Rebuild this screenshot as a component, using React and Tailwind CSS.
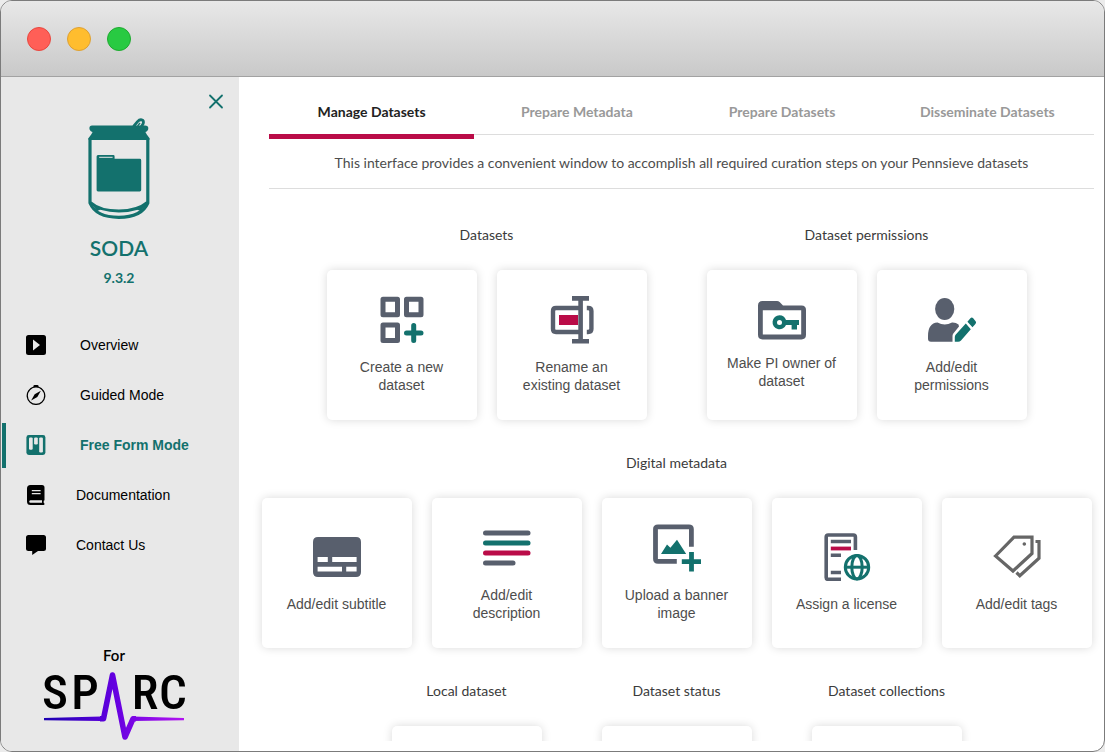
import React from "react";
import { BsCompass } from "react-icons/bs";

const GRAY = "#585f6d";
const TEAL = "#13716d";
const RED = "#ba0c48";

function Can() {
  return (
    <svg width="62" height="102" viewBox="0 0 62 102" fill="none" stroke={TEAL} aria-hidden="true">
      <path d="M45.5 8.5 L49.5 3.6 Q52 0.9 54.6 2.2 Q56.2 3.4 54.8 6.4 L53 9" strokeWidth="2.8" />
      <path d="M49.6 8 L52 5" strokeWidth="1.4" />
      <path d="M4 7.4 H57 Q60.3 7.4 60.3 10.2 Q60.3 13 57.4 14 L58.8 16.6 L61.4 20 V22 H0.6 V20 L3.2 16.6 L4.6 14 Q1.4 13 1.4 10.2 Q1.4 7.4 4 7.4 Z" fill={TEAL} stroke="none" />
      <path d="M2 20 V85 Q8 99.3 30.8 99.3 Q53.6 99.3 59.8 85 V20" strokeWidth="3.2" />
      <path d="M2.5 84.5 Q12 93 30.8 93 Q49.6 93 59.4 84.5" strokeWidth="3" />
      <path d="M3 85 L9 93 L14 91 Z M59 85 L52.6 93 L47.6 91 Z" fill={TEAL} stroke="none" />
      <path d="M8.6 38.6 Q8.6 37 10 37 H25.3 Q26.6 37 26.6 38.4 V40.8 H51.8 Q53.2 40.8 53.2 42.2 V72 Q53.2 73.4 51.8 73.4 H10 Q8.6 73.4 8.6 72 Z" fill={TEAL} stroke="none" />
      <path d="M11.2 39.4 H24.6" stroke="#bcd0cf" strokeWidth="1.4" />
    </svg>
  );
}

function SparcLogo() {
  return (
    <svg width="142" height="70" viewBox="0 0 142 70" className="overflow-visible" role="img" aria-label="SPARC">
      <defs>
        <linearGradient id="pulse" x1="0" y1="0" x2="142" y2="0" gradientUnits="userSpaceOnUse">
          <stop offset="0" stopColor="#1a00b0" />
          <stop offset="0.5" stopColor="#6400e0" />
          <stop offset="1" stopColor="#b414f0" />
        </linearGradient>
      </defs>
      <g fontFamily="'Roboto Condensed', 'Liberation Sans Narrow', 'Liberation Sans', sans-serif" fontSize="49" fontWeight="500" fill="#000" textAnchor="middle">
        <text x="12" y="39">S</text>
        <text x="42" y="39">P</text>
        <text x="102" y="39">R</text>
        <text x="130" y="39">C</text>
      </g>
      <path d="M1 48 L58 46.5 V51 L1 50.2 Z M89 46.5 L141 48 V50.2 L89 51 Z" fill="url(#pulse)" />
      <path d="M57 48.8 H60.5 L69.5 5 L82 67 L90 48.8 H93" fill="none" stroke="url(#pulse)" strokeWidth="5.6" strokeLinejoin="round" />
    </svg>
  );
}

function Icon({ h = 48, children }) {
  return (
    <svg width="48" height={h} viewBox={`0 0 48 ${h}`} fill="none" className="shrink-0" aria-hidden="true">
      {children}
    </svg>
  );
}

const icons = {
  create: (
    <Icon>
      <g stroke={GRAY} strokeWidth="5" strokeLinejoin="round">
        <rect x="5" y="3.2" width="14.5" height="15.6" />
        <rect x="28.5" y="3.2" width="14.5" height="15.6" />
        <rect x="5" y="29" width="14.5" height="15.6" />
      </g>
      <path d="M35.7 29.5 V44.5 M28.5 37 H43" stroke={TEAL} strokeWidth="5" strokeLinecap="round" />
    </Icon>
  ),
  rename: (
    <Icon>
      <path d="M31 12 H8 Q5 12 5 15 V33 Q5 36 8 36 H31" stroke={GRAY} strokeWidth="4.4" />
      <path d="M38.8 12 H40 Q43.4 12 43.4 15 V33 Q43.4 36 40 36 H38.8" stroke={GRAY} strokeWidth="4.4" />
      <rect x="11" y="19" width="19" height="10" fill={RED} />
      <path d="M24 2.4 H41 M24 45.2 H41 M32.6 2 V45" stroke={GRAY} strokeWidth="4.6" />
    </Icon>
  ),
  owner: (
    <Icon h={40}>
      <path fillRule="evenodd" d="M4.5 1 H19 Q20.6 1 21.6 2 L25 5.4 H43.5 Q48 5.4 48 10 V34.8 Q48 39.4 43.5 39.4 H4.5 Q0 39.4 0 34.8 V5.5 Q0 1 4.5 1 Z M4.8 10.3 V34.4 H43.2 V10.3 Z" fill={GRAY} />
      <path fillRule="evenodd" d="M21.5 15.3 A7 7 0 0 1 28 20 H41 V25 H39 V29.6 H33.6 V25 H28 A7 7 0 1 1 21.5 15.3 Z M21.5 19.9 A2.5 2.5 0 1 0 21.5 24.9 A2.5 2.5 0 1 0 21.5 19.9 Z" fill={TEAL} />
    </Icon>
  ),
  permissions: (
    <Icon>
      <ellipse cx="16.7" cy="13" rx="9.6" ry="11" fill={GRAY} />
      <path d="M9.5 26.5 Q16.7 30.5 24 26.5 Q28 26.3 30.5 28.6 L31 30.5 L25.3 37.5 Q24.5 38.6 24.5 40 V45.8 H3 Q0 45.8 0 42.8 V40 Q0 27 9.5 26.5 Z" fill={GRAY} />
      <path d="M37.8 27.6 L42.8 33.2 L33 44.4 Q31.8 45.8 30 45.8 H26.8 V41 Q26.8 39.6 27.8 38.4 Z M39.4 25.8 L42.4 22.2 Q43.8 20.9 45.2 22.2 L47.6 25.2 Q48.6 26.5 47.4 28 L44.5 31.3 Z" fill={TEAL} />
    </Icon>
  ),
  subtitle: (
    <Icon>
      <path fillRule="evenodd" d="M5 4 H43 Q48 4 48 9 V39 Q48 44 43 44 H5 Q0 44 0 39 V9 Q0 4 5 4 Z M4.6 24 V29 H14.8 V24 Z M19.2 24 V29 H43.6 V24 Z M4.6 33.8 V38.6 H29 V33.8 Z M33.2 33.8 V38.6 H43.6 V33.8 Z" fill={GRAY} />
    </Icon>
  ),
  description: (
    <Icon>
      <g strokeWidth="5" strokeLinecap="round">
        <path d="M2.5 9 H45" stroke={GRAY} />
        <path d="M2.5 19 H45" stroke={TEAL} />
        <path d="M2.5 29 H45" stroke={RED} />
        <path d="M2.5 39 H30" stroke={GRAY} />
      </g>
    </Icon>
  ),
  banner: (
    <Icon>
      <path d="M38.4 22.7 V5 Q38.4 2.8 36 2.8 H5 Q2.5 2.8 2.5 5 V35 Q2.5 37.4 5 37.4 H23.8" stroke={GRAY} strokeWidth="4.8" />
      <path d="M8 30 L14 20.5 L17.4 23.8 L24 15.8 L33.2 30 Z" fill={TEAL} />
      <path d="M38.5 28 V47.6 M28.8 37.7 H48" stroke={TEAL} strokeWidth="4.8" />
    </Icon>
  ),
  license: (
    <Icon>
      <path d="M32.4 17 V4 Q32.4 2 30.4 2 H5.2 Q3.2 2 3.2 4 V44.4 Q3.2 46.4 5.2 46.4 H18" stroke={GRAY} strokeWidth="3.6" />
      <path d="M7.8 8.5 H28 M7.8 22.2 H18 M7.8 39.5 H18" stroke={GRAY} strokeWidth="3.4" />
      <path d="M7.8 15.5 H28" stroke={RED} strokeWidth="3.8" />
      <g stroke={TEAL} strokeWidth="3">
        <circle cx="34" cy="34.2" r="11.7" />
        <ellipse cx="34" cy="34.2" rx="5.2" ry="11.7" />
        <path d="M22 34.2 H46" />
      </g>
    </Icon>
  ),
  tags: (
    <Icon>
      <g stroke="#666" strokeWidth="3.2">
        <path d="M2.5 23 L21 4.2 H39 V20.5 L20 38 Z" />
        <path d="M42.5 8.5 H46 V25.2 L26.8 42.8 L23.5 39.5" />
      </g>
      <circle cx="31.3" cy="11" r="1.8" fill="#666" />
    </Icon>
  ),
};

const navItems = [
  {
    label: "Overview",
    gap: "gap-[34px]",
    icon: (
      <svg width="20" height="20" viewBox="0 0 20 20" aria-hidden="true">
        <path fillRule="evenodd" fill="#000" d="M2.5 0 H17.5 Q20 0 20 2.5 V17.5 Q20 20 17.5 20 H2.5 Q0 20 0 17.5 V2.5 Q0 0 2.5 0 Z M7 4.6 V15.6 L14 10.1 Z" />
      </svg>
    ),
  },
  { label: "Guided Mode", gap: "gap-[34px]", icon: <BsCompass size={20} /> },
  {
    label: "Free Form Mode",
    gap: "gap-[34px]",
    active: true,
    icon: (
      <svg width="20" height="20" viewBox="0 0 20 20" aria-hidden="true">
        <rect x="0.4" width="19" height="20" rx="2.4" fill={TEAL} />
        <g fill="#e8e8e8">
          <rect x="3" y="2.4" width="3.7" height="12.4" rx="1.2" />
          <rect x="8.1" y="2.4" width="3.7" height="7" rx="1.2" />
          <rect x="13.2" y="2.4" width="3.7" height="15" rx="1.2" />
        </g>
      </svg>
    ),
  },
  {
    label: "Documentation",
    gap: "gap-[30px]",
    icon: (
      <svg width="20" height="20" viewBox="0 0 20 20" aria-hidden="true">
        <path fillRule="evenodd" fill="#000" d="M4.5 0 H16 Q18.5 0 18.5 2.5 V15 Q18.5 15.6 17.7 15.8 V17.8 Q18.5 18 18.5 19 Q18.5 20 17.5 20 H4.5 Q1 20 1 16.5 V3.5 Q1 0 4.5 0 Z M5.8 5 V6.3 H14.6 V5 Z M5.8 8 V9.3 H14.6 V8 Z M4.4 15.2 Q3.2 15.4 3.2 16.6 Q3.2 17.8 4.4 17.8 H16 V15.2 Z" />
      </svg>
    ),
  },
  {
    label: "Contact Us",
    gap: "gap-[30px]",
    icon: (
      <svg width="20" height="20" viewBox="0 0 20 20" aria-hidden="true">
        <path fill="#000" d="M2.5 0 H17.5 Q20 0 20 2.5 V13.5 Q20 16 17.5 16 H12 L6.2 20 V16 H2.5 Q0 16 0 13.5 V2.5 Q0 0 2.5 0 Z" />
      </svg>
    ),
  },
];

const tabs = ["Manage Datasets", "Prepare Metadata", "Prepare Datasets", "Disseminate Datasets"];

const rows = [
  [
    { title: "Datasets", cards: [["Create a new dataset", "create"], ["Rename an existing dataset", "rename"]] },
    { title: "Dataset permissions", cards: [["Make PI owner of dataset", "owner"], ["Add/edit permissions", "permissions"]] },
  ],
  [
    {
      title: "Digital metadata",
      cards: [
        ["Add/edit subtitle", "subtitle"],
        ["Add/edit description", "description"],
        ["Upload a banner image", "banner"],
        ["Assign a license", "license"],
        ["Add/edit tags", "tags"],
      ],
    },
  ],
  [
    { title: "Local dataset", cards: [[]] },
    { title: "Dataset status", cards: [[]] },
    { title: "Dataset collections", cards: [[]] },
  ],
];

function Card({ label, icon }) {
  return (
    <button
      type="button"
      className="flex size-[150px] shrink-0 flex-col items-center justify-center gap-[14px] rounded-[5px] bg-white px-4 font-['Liberation_Sans',Arial,sans-serif] text-sm leading-[18px] text-[#4d4d4d] shadow-[0_0_10px_rgba(0,0,0,0.15)]"
    >
      {icons[icon]}
      {label && <span>{label}</span>}
    </button>
  );
}

function Sidebar() {
  return (
    <aside className="flex w-[238px] shrink-0 flex-col bg-[#e8e8e8] pt-4 pb-[11px]">
      <button type="button" aria-label="Close menu" className="mr-[15px] self-end">
        <svg width="16" height="16" viewBox="0 0 16 16" stroke={TEAL} strokeWidth="1.8" strokeLinecap="round" aria-hidden="true">
          <path d="M2 2.5 L14 14.5 M14 2.5 L2 14.5" />
        </svg>
      </button>
      <div className="mt-[9px] flex flex-col items-center pr-0.5 text-[#13716d]">
        <Can />
        <h1 className="mt-4 text-[21px] leading-6 font-semibold">SODA</h1>
        <p className="mt-2 text-sm leading-5 font-bold">9.3.2</p>
      </div>
      <nav className="mt-8 font-['Liberation_Sans',Arial,sans-serif] text-sm">
        <ul>
          {navItems.map((item) => (
            <li key={item.label} className="flex h-[50px] items-center pl-px">
              <a
                href="#"
                aria-current={item.active ? "page" : undefined}
                className={`flex h-[45px] flex-1 items-center border-l-4 pl-5 ${item.gap} ${
                  item.active ? "border-[#13716d] font-bold text-[#13716d]" : "border-transparent text-black"
                }`}
              >
                {item.icon}
                {item.label}
              </a>
            </li>
          ))}
        </ul>
      </nav>
      <div className="mt-auto flex flex-col items-center pr-3">
        <p className="mb-[5px] text-[15px] leading-5 font-semibold text-black">For</p>
        <SparcLogo />
      </div>
    </aside>
  );
}

export default function App() {
  return (
    <div className="h-screen bg-[#ececec] font-[Lato,sans-serif]">
      <div className="flex h-full flex-col overflow-hidden rounded-[12px] border border-[#7b7b7b] bg-white">
        <header className="flex h-[76px] shrink-0 items-center gap-4 border-b border-[#a2a2a2] bg-linear-to-b from-[#e8e8e8] to-[#c9c9c9] pl-[26px]">
          <button type="button" aria-label="Close" className="size-6 rounded-full border border-[#e8473f] bg-[#ff5f57]" />
          <button type="button" aria-label="Minimize" className="size-6 rounded-full border border-[#dda034] bg-[#ffbd2e]" />
          <button type="button" aria-label="Maximize" className="size-6 rounded-full border border-[#1faa30] bg-[#28ca42]" />
        </header>
        <div className="flex min-h-0 flex-1">
          <Sidebar />
          <main className="mb-[10px] min-w-0 flex-1 overflow-hidden pr-[10px] pl-5">
            <div className="ml-[10px]">
              <div role="tablist" className="flex h-[58px] border-b border-[#dddddd] pr-1">
                {tabs.map((tab, i) => (
                  <button
                    key={tab}
                    type="button"
                    role="tab"
                    aria-selected={i === 0}
                    className={`h-[62px] flex-1 border-b-[5px] pt-3 text-sm font-bold ${
                      i === 0 ? "border-[#ba0c48] text-[#222222]" : "border-transparent text-[#999999]"
                    }`}
                  >
                    {tab}
                  </button>
                ))}
              </div>
              <p className="flex h-[54px] items-center justify-center border-b border-[#dddddd] pt-0.5 text-sm text-[#4d4d4d]">
                This interface provides a convenient window to accomplish all required curation steps on your Pennsieve datasets
              </p>
            </div>
            <div className="flex flex-col gap-[33px] pt-9">
              {rows.map((groups, r) => (
                <div key={r} className="flex justify-center gap-[60px]">
                  {groups.map((group) => (
                    <section key={group.title} className="flex flex-col items-center">
                      <h2 className="mb-[25px] text-sm leading-5 text-[#3b3b3b]">{group.title}</h2>
                      <div className="flex gap-5">
                        {group.cards.map(([label, icon], i) => (
                          <Card key={i} label={label} icon={icon} />
                        ))}
                      </div>
                    </section>
                  ))}
                </div>
              ))}
            </div>
          </main>
        </div>
      </div>
    </div>
  );
}
